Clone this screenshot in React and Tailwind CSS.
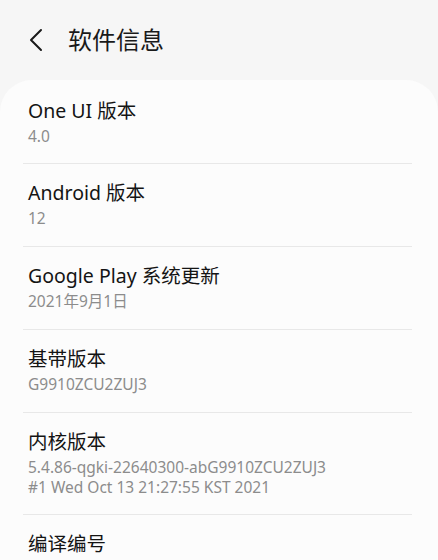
import React from 'react';

const items = [
  { title: 'One UI 版本', lines: ['4.0'] },
  { title: 'Android 版本', lines: ['12'] },
  { title: 'Google Play 系统更新', lines: ['2021年9月1日'] },
  { title: '基带版本', lines: ['G9910ZCU2ZUJ3'] },
  { title: '内核版本', lines: ['5.4.86-qgki-22640300-abG9910ZCU2ZUJ3', '#1 Wed Oct 13 21:27:55 KST 2021'] },
  { title: '编译编号', lines: [] },
];

const App = () => {
  return (
    <div
      className="w-[438px] h-[560px] overflow-hidden bg-[#f6f6f6] flex flex-col"
      style={{ fontFamily: '"Noto Sans", "Noto Sans CJK SC", sans-serif' }}
    >
      {/* Header */}
      <header className="h-[80px] flex items-center shrink-0">
        <button className="w-[44px] h-[44px] ml-[15px] flex items-center justify-center text-[#1a1a1a]">
          <svg width="20" height="24" viewBox="0 0 20 24" fill="none" stroke="currentColor" strokeWidth="2" strokeLinecap="round" strokeLinejoin="round">
            <path d="M14 2L4 12l10 10" />
          </svg>
        </button>
        <h1 className="ml-[9px] text-[24px] leading-[32px] text-[#1a1a1a] -mt-[1px]">软件信息</h1>
      </header>

      {/* Card */}
      <div className="flex-1 bg-[#fcfcfc] rounded-t-[32px]">
        {items.map((item, i) => (
          <div key={item.title}>
            {i > 0 && <div className="h-px bg-[#e8e8e8] ml-[23px] mr-[26px]"></div>}
            <div
              className={`${i === 0 ? 'pt-[18px]' : 'pt-[16px]'} ${item.lines.length > 1 || i === 0 ? 'pb-[17px]' : 'pb-[18px]'} pl-[28px] pr-[26px]`}
            >
              <div className="text-[19.5px] leading-[26px] text-[#141414]">{item.title}</div>
              {item.lines.length > 0 && (
                <div className="mt-[2px]">
                  {item.lines.map((line) => (
                    <div key={line} className="text-[15.5px] leading-[20px] text-[#8c8c8c] whitespace-nowrap">{line}</div>
                  ))}
                </div>
              )}
            </div>
          </div>
        ))}
      </div>
    </div>
  );
};

export default App;
